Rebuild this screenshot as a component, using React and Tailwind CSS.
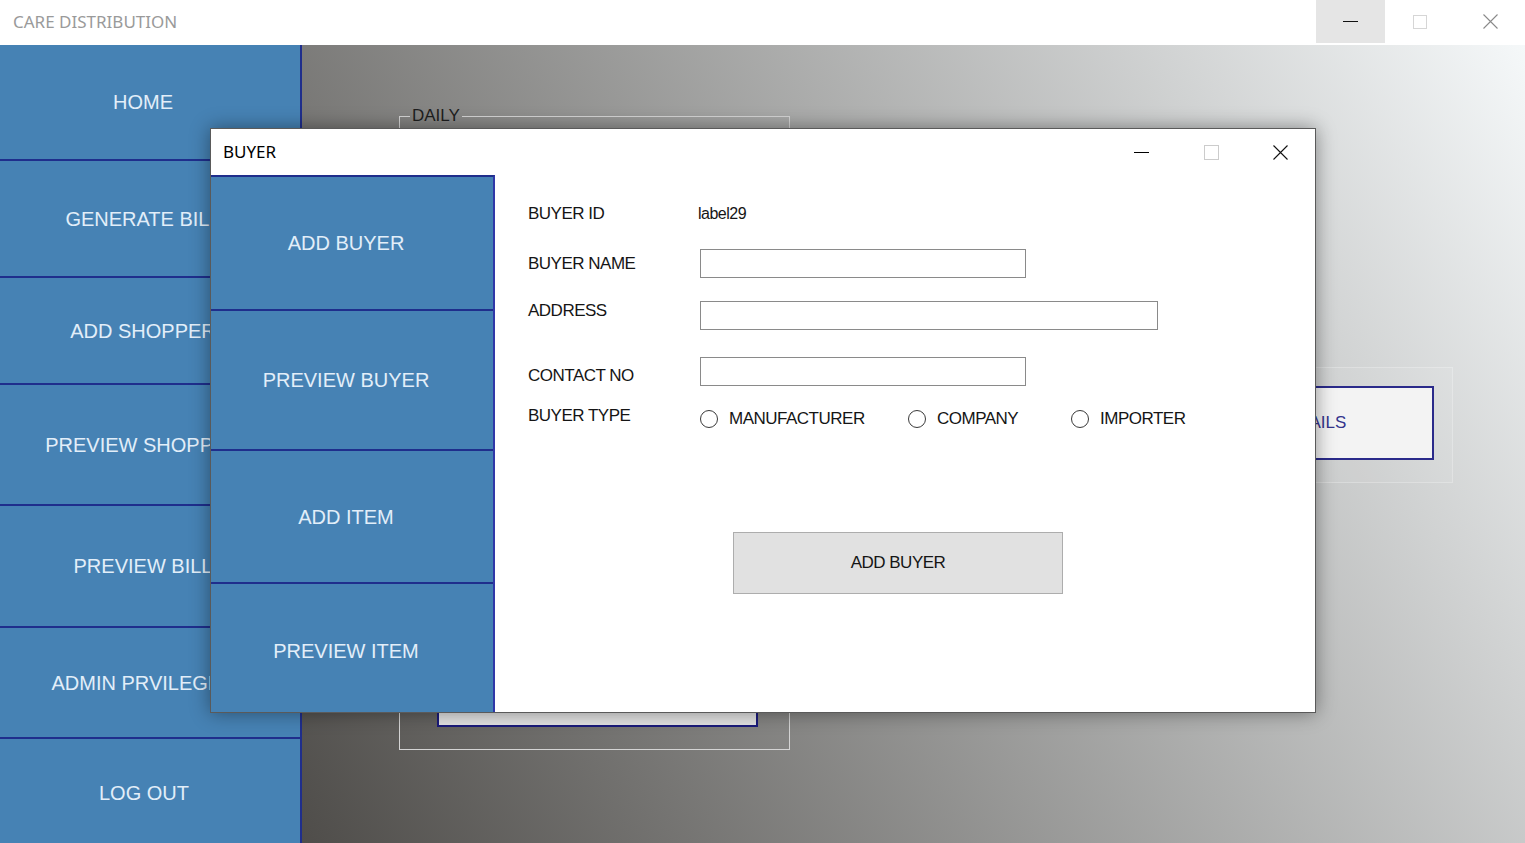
import React from "react";

const sideItems = [
  { label: "HOME", h: "h-[116px]" },
  { label: "GENERATE BILL", h: "h-[117px]" },
  { label: "ADD SHOPPER", h: "h-[107px]" },
  { label: "PREVIEW SHOPPER", h: "h-[121px]" },
  { label: "PREVIEW BILL", h: "h-[122px]" },
  { label: "ADMIN PRVILEGES", h: "h-[111px]" },
];

const dlgItems = [
  { label: "ADD BUYER", h: "h-[134px]" },
  { label: "PREVIEW BUYER", h: "h-[140px]" },
  { label: "ADD ITEM", h: "h-[133px]" },
];

function XIcon({ color, size = 15 }) {
  return (
    <svg width={size} height={size} viewBox="0 0 15 15">
      <path d="M0.5 0.5 L14.5 14.5 M14.5 0.5 L0.5 14.5" stroke={color} strokeWidth="1.1" fill="none" />
    </svg>
  );
}

function Radio({ label, w }) {
  return (
    <div className={`flex items-center ${w}`}>
      <span className="w-[18px] h-[18px] rounded-full border border-[#3a3a3a] bg-white shrink-0" />
      <span className="ml-[11px]">{label}</span>
    </div>
  );
}

export default function App() {
  return (
    <div className="w-[1525px] h-[843px] relative overflow-hidden bg-white flex flex-col font-['Liberation_Sans',Arial,sans-serif]">
      {/* outer title bar */}
      <div className="h-[45px] flex items-start bg-white shrink-0">
        <span className="ml-[13px] mt-[10px] text-[17px] text-[#9a9a9a] font-['Noto_Sans',sans-serif] leading-[24px]">
          CARE DISTRIBUTION
        </span>
        <div className="flex-1" />
        <div className="w-[69px] h-[43px] bg-[#e5e5e5] flex items-center justify-center">
          <span className="w-[15px] h-px bg-[#111]" />
        </div>
        <div className="w-[70px] h-[43px] flex items-center justify-center">
          <span className="w-[14px] h-[14px] border border-[#d6d6d6]" />
        </div>
        <div className="w-[70px] h-[43px] flex items-center justify-center">
          <XIcon color="#8a8a8a" />
        </div>
      </div>

      {/* body */}
      <div className="flex-1 flex min-h-0">
        <div className="w-[302px] bg-[#4682b4] border-r-2 border-[#1f2e8c] flex flex-col text-[20px] text-[#e2eef9]">
          {sideItems.map((it) => (
            <div key={it.label} className={`${it.h} border-b-2 border-[#1f2e8c] flex items-center justify-center pr-[14px] whitespace-nowrap`}>
              {it.label}
            </div>
          ))}
          <div className="flex-1 flex items-center justify-center pr-[12px] pt-[4px]">LOG OUT</div>
        </div>

        <div className="flex-1 flex items-start bg-[linear-gradient(60deg,#4f4d4a,#f5f8f9)]">
          <fieldset className="ml-[97px] mt-[61px] w-[391px] h-[644px] border border-[#d4d4d4] flex flex-col justify-end pb-[22px] min-w-0">
            <legend className="ml-[10px] px-[2px] text-[17px] text-[#1e1e1e] leading-[20px]">DAILY</legend>
            <div className="h-[120px] border-2 border-[#1a1a7a] bg-[#e2e2e2] ml-[37px] mr-[31px]" />
          </fieldset>
          <div className="ml-[378px] mt-[322px] w-[285px] h-[116px] border border-white/25 bg-white/5 pl-[20px] pt-[18px]">
            <div className="w-[245px] h-[74px] border-2 border-[#2a2a8a] bg-[#f3f3f3] flex items-center justify-center text-[17px] text-[#34348c]">
              DETAILS
            </div>
          </div>
        </div>
      </div>

      {/* BUYER dialog */}
      <div className="absolute left-[210px] top-[128px] w-[1106px] h-[585px] border border-[#5a5a5a] bg-white flex flex-col shadow-[0_0_18px_rgba(0,0,0,0.4)]">
        <div className="h-[46px] flex items-center shrink-0">
          <span className="ml-[12px] text-[17px] text-black font-['Noto_Sans',sans-serif]">BUYER</span>
          <div className="flex-1" />
          <div className="w-[70px] h-full flex items-center justify-center">
            <span className="w-[15px] h-px bg-black" />
          </div>
          <div className="w-[70px] h-full flex items-center justify-center">
            <span className="w-[15px] h-[15px] border border-[#cccccc]" />
          </div>
          <div className="w-[69px] h-full flex items-center justify-center">
            <XIcon color="#111" />
          </div>
        </div>
        <div className="flex-1 flex min-h-0">
          <div className="w-[284px] bg-[#4682b4] border-t-2 border-r-2 border-t-[#1f2e8c] border-r-[#3038a8] flex flex-col text-[20px] text-[#e2eef9]">
            {dlgItems.map((it) => (
              <div key={it.label} className={`${it.h} border-b-2 border-[#1f2e8c] flex items-center justify-center pr-[12px] whitespace-nowrap`}>
                {it.label}
              </div>
            ))}
            <div className="flex-1 flex items-center justify-center pr-[12px] pt-[6px]">PREVIEW ITEM</div>
          </div>

          <div className="flex-1 flex flex-col pl-[33px] pt-[25px] text-[17px] tracking-[-0.5px] text-[#151515] leading-[20px]">
            <div className="h-[26px] flex items-center">
              <span className="w-[170px] mt-[2px]">BUYER ID</span>
              <span className="text-[16px] mt-[2px]">label29</span>
            </div>
            <div className="mt-[23px] h-[29px] flex items-center">
              <span className="w-[172px]">BUYER NAME</span>
              <div className="w-[326px] h-full border border-[#8a8a8a] bg-white" />
            </div>
            <div className="mt-[23px] h-[29px] flex items-start">
              <span className="w-[172px]">ADDRESS</span>
              <div className="w-[458px] h-full border border-[#8a8a8a] bg-white" />
            </div>
            <div className="mt-[27px] h-[29px] flex items-start">
              <span className="w-[172px] mt-[9px]">CONTACT NO</span>
              <div className="w-[326px] h-full border border-[#8a8a8a] bg-white" />
            </div>
            <div className="mt-[20px] h-[26px] flex items-start">
              <span className="w-[172px]">BUYER TYPE</span>
              <div className="flex items-center h-full">
                <Radio label="MANUFACTURER" w="w-[208px]" />
                <Radio label="COMPANY" w="w-[163px]" />
                <Radio label="IMPORTER" w="w-[140px]" />
              </div>
            </div>
            <div className="mt-[100px] ml-[205px] w-[330px] h-[62px] bg-[#e1e1e1] border border-[#adadad] flex items-center justify-center">
              ADD BUYER
            </div>
          </div>
        </div>
      </div>
    </div>
  );
}
